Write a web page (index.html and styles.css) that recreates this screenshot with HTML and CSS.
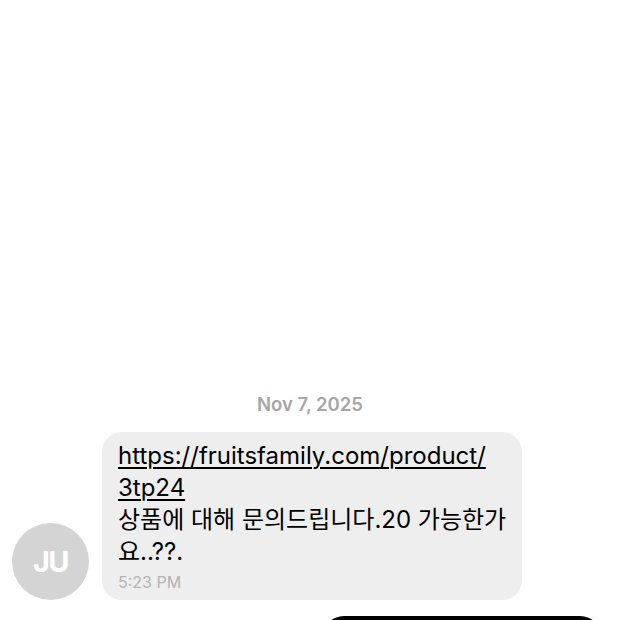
FILE: index.html
```html
<!DOCTYPE html>
<html lang="ko">
<head>
<meta charset="utf-8">
<link rel="stylesheet" href="styles.css">
</head>
<body>
<main class="thread">
  <div class="date">Nov 7, 2025</div>
  <div class="row">
    <div class="avatar">JU</div>
    <div class="bubble">
      <p class="msg"><a class="link">https://fruitsfamily.com/product/<br>3tp24</a><br>상품에 대해 문의드립니다.20 가능한가<br>요..??.</p>
      <div class="time">5:23 PM</div>
    </div>
  </div>
  <div class="outgoing"></div>
</main>
</body>
</html>
```
FILE: styles.css
```css
* { box-sizing: border-box; }
html, body { margin: 0; padding: 0; background: #fff; }
body {
  font-family: Inter, "Noto Sans CJK KR", "Noto Sans", sans-serif;
  color: #000;
}
.thread {
  height: 620px;
  overflow: hidden;
  padding-top: 392px;
  display: flex;
  flex-direction: column;
}
.date {
  text-align: center;
  font-size: 18.5px;
  line-height: 24px;
  font-weight: 600;
  color: #a6a6a6;
}
.row {
  display: flex;
  align-items: flex-end;
  margin-top: 16px;
  padding-left: 12px;
  gap: 13px;
}
.avatar {
  width: 77px;
  height: 77px;
  border-radius: 50%;
  background: #d4d4d4;
  color: #fff;
  font-weight: 700;
  font-size: 29px;
  letter-spacing: -1.5px;
  display: flex;
  align-items: center;
  justify-content: center;
  flex: none;
}
.bubble {
  width: 420px;
  background: #eeeeee;
  border-radius: 20px;
  padding: 8px 16px 8px 16px;
}
.msg {
  margin: 0;
  font-size: 24px;
  line-height: 32px;
  white-space: nowrap;
}
.link {
  color: #000;
  text-decoration: underline;
  text-decoration-thickness: 1.5px;
  text-underline-offset: 3px;
}
.time {
  margin-top: 4px;
  font-size: 16px;
  line-height: 20px;
  color: #b3b3b3;
}
.outgoing {
  flex: none;
  margin-top: 16px;
  margin-left: 322px;
  width: 280px;
  height: 60px;
  background: #000;
  border-radius: 22px;
}
```
